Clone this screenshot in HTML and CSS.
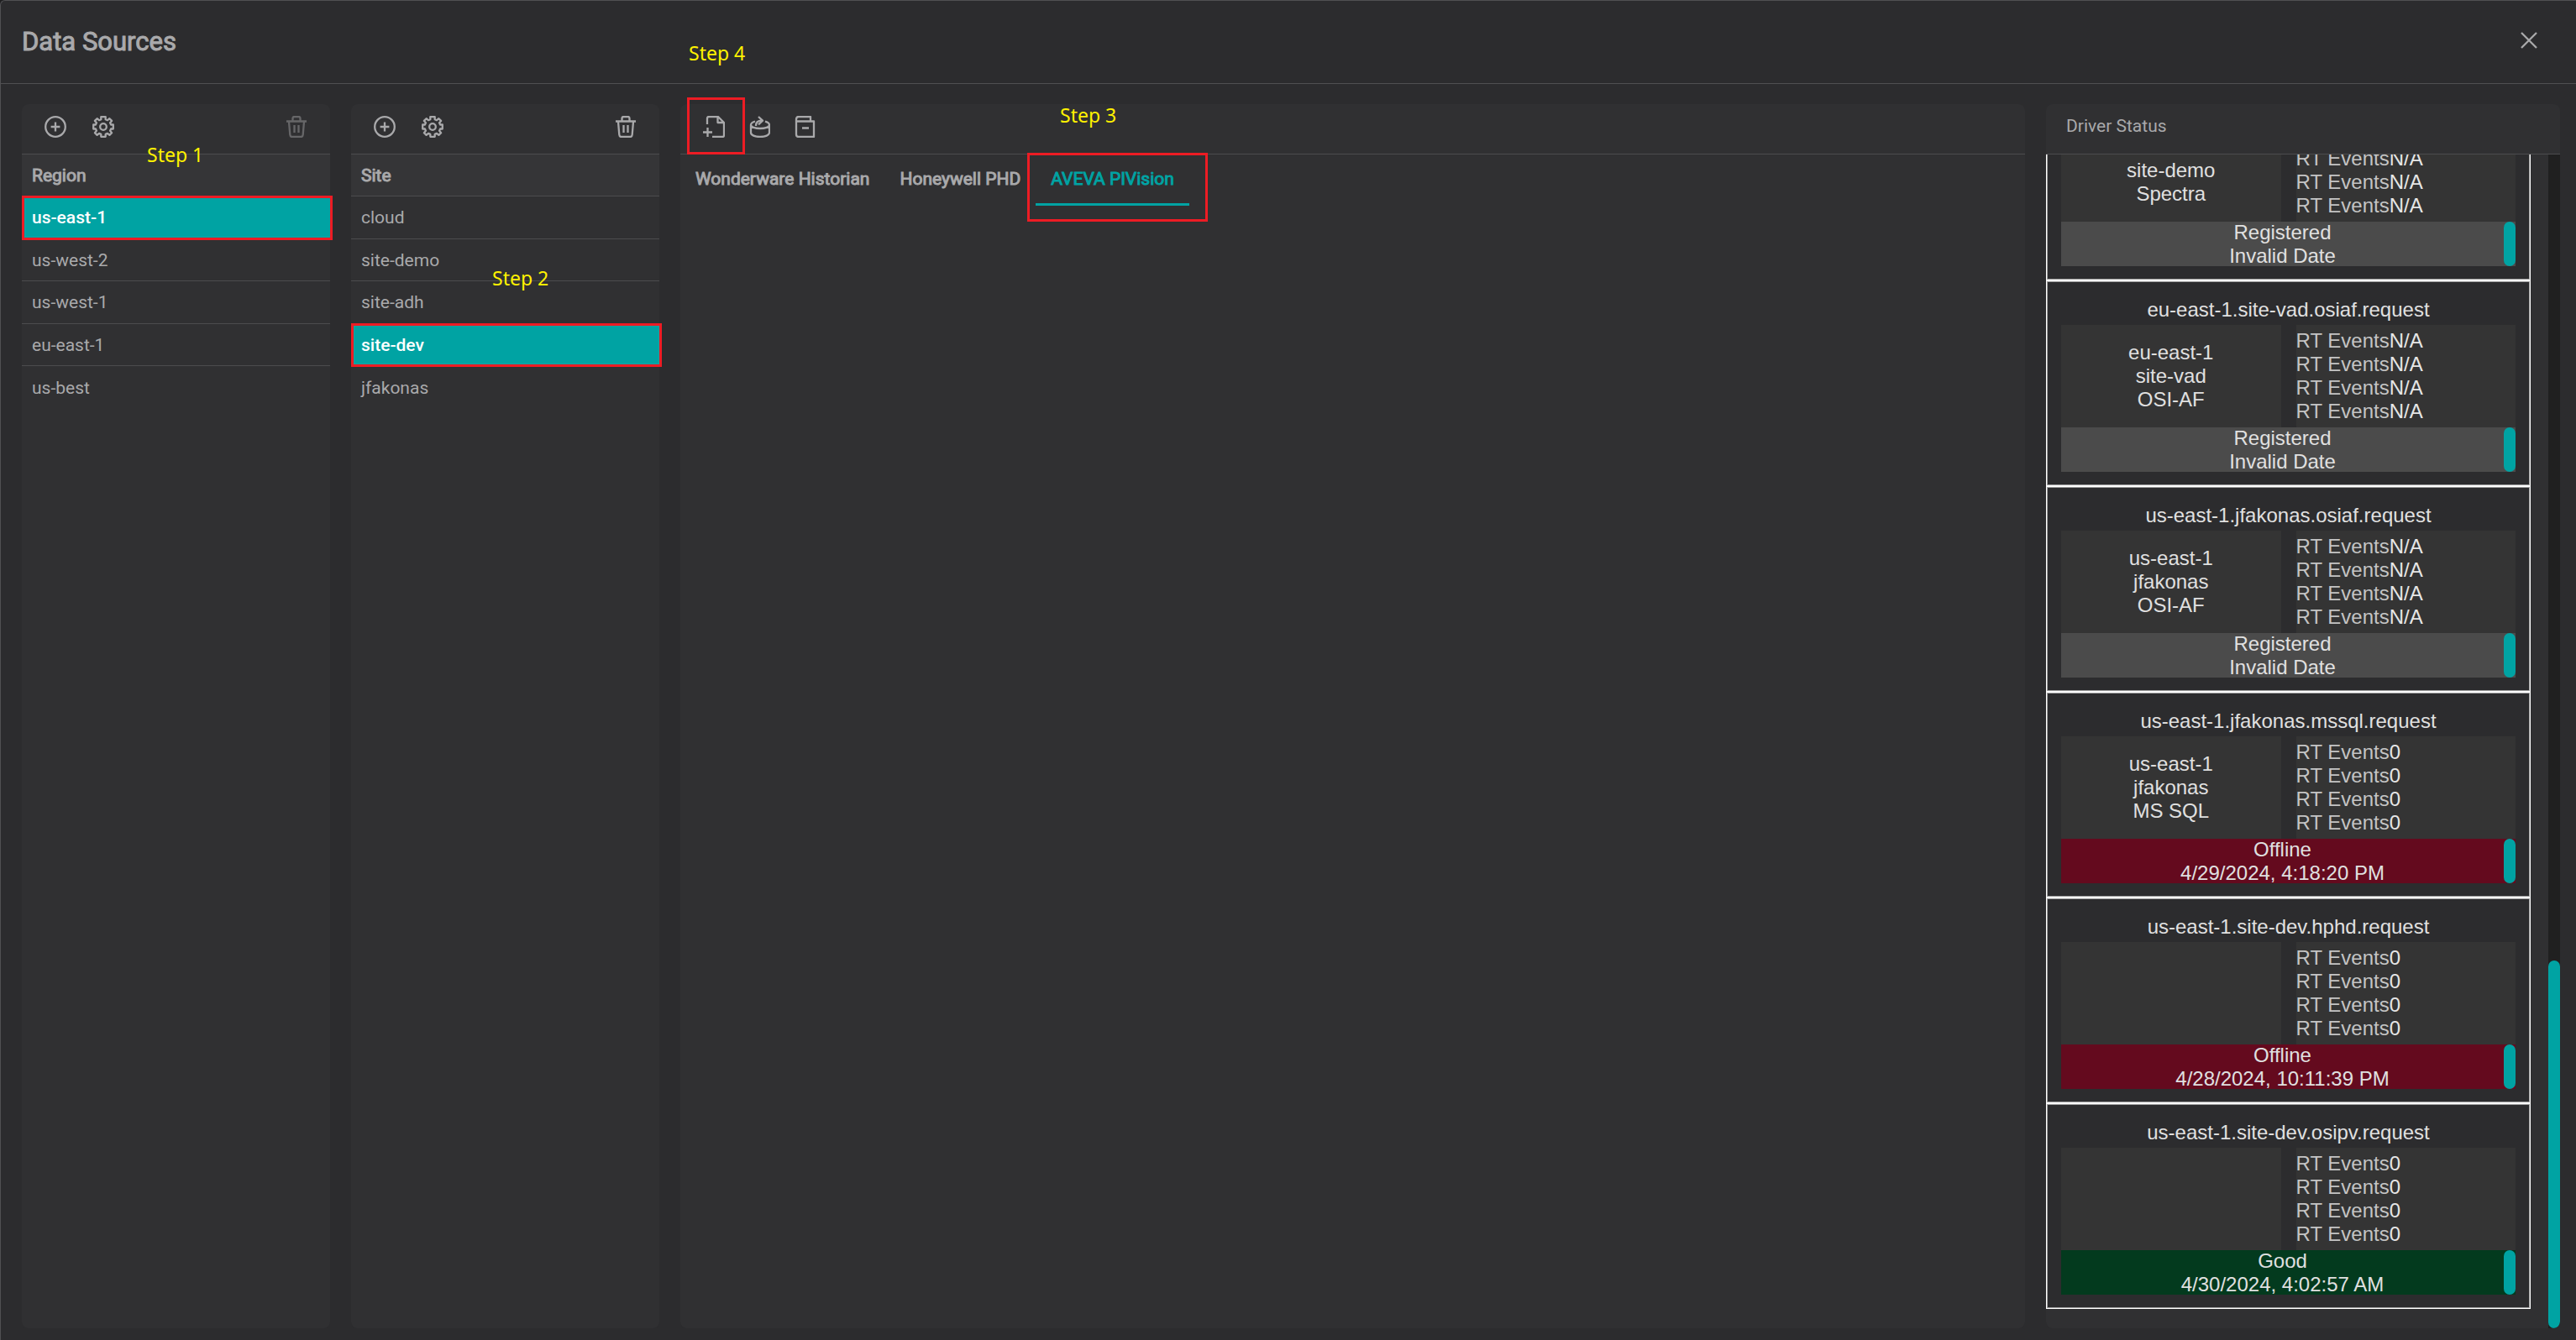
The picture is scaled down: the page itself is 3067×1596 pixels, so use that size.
FILE: index.html
```html
<!DOCTYPE html>
<html lang="en">
<head>
<meta charset="utf-8">
<title>Data Sources</title>
<link rel="stylesheet" href="styles.css">
</head>
<body>
<svg class="sprite" aria-hidden="true">
  <symbol id="i-add" viewBox="0 0 26 26"><circle cx="13" cy="13" r="11.8"/><path d="M13 7.6v10.8M7.6 13h10.8"/></symbol>
  <symbol id="i-gear" viewBox="0 0 26 26"><path d="M10.300 1.200h5.400V4.200L18 5.200l2.400-2 2.700 2.700-2 2.400 1 2.200h2.700v5h-2.700l-1 2.300 2 2.400-2.700 2.700-2.400-2-2.300 1v2.900h-5.400v-2.900l-2.300-1-2.400 2-2.700-2.700 2-2.400-1-2.300H1.200v-5h2.700l1-2.200-2-2.400 2.700-2.700 2.400 2 2.300-1z"/><circle cx="13" cy="13" r="3.800"/></symbol>
  <symbol id="i-trash" viewBox="0 0 26 26"><path d="M1 6.500h24M8.500 6V3q0-2 2-2h5q2 0 2 2v3M4 7l1.300 15.500q.2 2.500 2.500 2.500h10.400q2.300 0 2.500-2.500L22 7M10.500 11v9M15.500 11v9"/></symbol>
  <symbol id="i-file-add" viewBox="0 0 26 26"><path d="M5 10V3q0-2 2-2h11l7 7v15q0 2-2 2H11M17.500 1.500V8H24M5.500 14v11M0 19.500h11"/></symbol>
  <symbol id="i-db" viewBox="-1 0 26 26"><path d="M7 6.500C3.500 7.500 2 9 2 10.800c0 2.500 5 4.200 11 4.200s11-1.700 11-4.200c0-1.700-1.500-3.200-5-4.200M2 11v9c0 3 5 5 11 5s11-2 11-5v-9M8 12c0-4 2-6.300 7-6.300M11 1l5 4.700-5 4.700"/></symbol>
  <symbol id="i-book" viewBox="0 0 26 26"><path d="M20 6.500V1H6Q3 1 3 4v18q0 3 3 3h18V6.500H4M10 14.500h8"/></symbol>
  <symbol id="i-close" viewBox="0 0 20 20"><path d="M1 1l18 18M19 1L1 19"/></symbol>
</svg>
<main class="dialog">
  <header class="dialog-head">
    <h1>Data Sources</h1>
    <button class="icon-btn" aria-label="Close"><svg class="icon close"><use href="#i-close"/></svg></button>
  </header>
  <div class="columns">
    <section class="panel">
      <div class="toolbar">
        <button class="icon-btn" aria-label="Add region"><svg class="icon"><use href="#i-add"/></svg></button>
        <button class="icon-btn" aria-label="Region settings"><svg class="icon"><use href="#i-gear"/></svg></button>
        <button class="icon-btn push" aria-label="Delete region" disabled><svg class="icon"><use href="#i-trash"/></svg></button>
      </div>
      <table class="list">
        <thead><tr><th scope="col">Region</th></tr></thead>
        <tbody>
          <tr class="selected"><td>us-east-1<span class="mark mark-row"></span></td></tr>
          <tr><td>us-west-2</td></tr>
          <tr><td>us-west-1</td></tr>
          <tr><td>eu-east-1</td></tr>
          <tr><td>us-best</td></tr>
        </tbody>
      </table>
      <span class="step step-1">Step 1</span>
    </section>
    <section class="panel">
      <div class="toolbar">
        <button class="icon-btn" aria-label="Add site"><svg class="icon"><use href="#i-add"/></svg></button>
        <button class="icon-btn" aria-label="Site settings"><svg class="icon"><use href="#i-gear"/></svg></button>
        <button class="icon-btn push" aria-label="Delete site"><svg class="icon"><use href="#i-trash"/></svg></button>
      </div>
      <table class="list">
        <thead><tr><th scope="col">Site</th></tr></thead>
        <tbody>
          <tr><td>cloud</td></tr>
          <tr><td>site-demo</td></tr>
          <tr><td>site-adh</td></tr>
          <tr class="selected"><td>site-dev<span class="mark mark-row"></span></td></tr>
          <tr><td>jfakonas</td></tr>
        </tbody>
      </table>
      <span class="step step-2">Step 2</span>
    </section>
    <section class="panel">
      <div class="toolbar tight">
        <button class="icon-btn" aria-label="Add data source"><svg class="icon"><use href="#i-file-add"/></svg><span class="mark mark-add"></span></button>
        <button class="icon-btn" aria-label="Refresh data source"><svg class="icon"><use href="#i-db"/></svg></button>
        <button class="icon-btn" aria-label="Remove data source"><svg class="icon"><use href="#i-book"/></svg></button>
      </div>
      <nav class="tabs">
        <button class="tab">Wonderware Historian</button>
        <button class="tab">Honeywell PHD</button>
        <button class="tab active">AVEVA PIVision<span class="mark mark-tab"></span></button>
      </nav>
      <span class="step step-3">Step 3</span>
      <span class="step step-4">Step 4</span>
    </section>
    <section class="panel">
      <div class="toolbar status-title"><h2>Driver Status</h2></div>
      <div class="drivers">
        <div class="cards">
          <article class="card">
            <h3></h3>
            <div class="info"><br>site-demo<br>Spectra</div>
            <div class="events"><br><p>RT Events<b>N/A</b></p><p>RT Events<b>N/A</b></p><p>RT Events<b>N/A</b></p></div>
            <div class="state"><p>Registered<br>Invalid Date</p><i class="thumb"></i></div>
          </article>
          <article class="card">
            <h3>eu-east-1.site-vad.osiaf.request</h3>
            <div class="info">eu-east-1<br>site-vad<br>OSI-AF</div>
            <div class="events"><p>RT Events<b>N/A</b></p><p>RT Events<b>N/A</b></p><p>RT Events<b>N/A</b></p><p>RT Events<b>N/A</b></p></div>
            <div class="state"><p>Registered<br>Invalid Date</p><i class="thumb"></i></div>
          </article>
          <article class="card">
            <h3>us-east-1.jfakonas.osiaf.request</h3>
            <div class="info">us-east-1<br>jfakonas<br>OSI-AF</div>
            <div class="events"><p>RT Events<b>N/A</b></p><p>RT Events<b>N/A</b></p><p>RT Events<b>N/A</b></p><p>RT Events<b>N/A</b></p></div>
            <div class="state"><p>Registered<br>Invalid Date</p><i class="thumb"></i></div>
          </article>
          <article class="card">
            <h3>us-east-1.jfakonas.mssql.request</h3>
            <div class="info">us-east-1<br>jfakonas<br>MS SQL</div>
            <div class="events"><p>RT Events<b>0</b></p><p>RT Events<b>0</b></p><p>RT Events<b>0</b></p><p>RT Events<b>0</b></p></div>
            <div class="state offline"><p>Offline<br>4/29/2024, 4:18:20 PM</p><i class="thumb"></i></div>
          </article>
          <article class="card">
            <h3>us-east-1.site-dev.hphd.request</h3>
            <div class="info"></div>
            <div class="events"><p>RT Events<b>0</b></p><p>RT Events<b>0</b></p><p>RT Events<b>0</b></p><p>RT Events<b>0</b></p></div>
            <div class="state offline"><p>Offline<br>4/28/2024, 10:11:39 PM</p><i class="thumb"></i></div>
          </article>
          <article class="card">
            <h3>us-east-1.site-dev.osipv.request</h3>
            <div class="info"></div>
            <div class="events"><p>RT Events<b>0</b></p><p>RT Events<b>0</b></p><p>RT Events<b>0</b></p><p>RT Events<b>0</b></p></div>
            <div class="state good"><p>Good<br>4/30/2024, 4:02:57 AM</p><i class="thumb"></i></div>
          </article>
        </div>
        <div class="track"><i class="thumb"></i></div>
      </div>
    </section>
  </div>
</main>
</body>
</html>
```

FILE: styles.css
```css
* { box-sizing: border-box; }
body {
  margin: 0;
  background: #1e1e1f;
  color: #a9a9ab;
  font: 400 21px/24px Roboto, "Liberation Sans", sans-serif;
}
h1, h2, h3, p { margin: 0; }
button { border: 0; padding: 0; background: none; color: inherit; font: inherit; }
.sprite { position: absolute; width: 0; height: 0; }

.dialog {
  height: 100vh;
  display: flex;
  flex-direction: column;
  background: #2c2c2e;
  border: solid #505052;
  border-width: 1px 0 0 1px;
  border-radius: 6px 0 0 0;
}
.dialog-head {
  display: flex;
  align-items: center;
  justify-content: space-between;
  height: 99px;
  padding: 0 46px 4px 25px;
  border-bottom: 1px solid #505052;
}
h1 { padding-top: 4px; font-size: 31px; font-weight: 400; line-height: 40px; }
h1, .list th, .tab { -webkit-text-stroke: 1px currentColor; }

.columns {
  flex: 1;
  min-height: 0;
  display: grid;
  grid-template-columns: 367fr 367fr 1601fr 612fr;
  gap: 25px;
  padding: 24px 19px 14px 25px;
}
.panel {
  position: relative;
  display: flex;
  flex-direction: column;
  min-width: 0;
  min-height: 0;
  background: #303032;
  border-radius: 8px;
}

.toolbar {
  display: flex;
  align-items: center;
  gap: 31px;
  flex: none;
  height: 60px;
  padding: 0 27px 5px;
  border-bottom: 1px solid #4c4c4e;
}
.toolbar.tight { gap: 28px; }
.toolbar.status-title { padding: 0 24px 8px; }
h2 { font-size: 21px; font-weight: 400; line-height: 24px; }
.icon-btn { position: relative; display: flex; }
.icon-btn:disabled { opacity: .45; }
.push { margin-left: auto; }
.icon { width: 26px; height: 26px; overflow: visible; fill: none; stroke: #a9a9ab; stroke-width: 2.3; stroke-linejoin: round; }
.icon.close { width: 20px; height: 20px; }

.list { width: 100%; border-spacing: 0; }
.list th, .list td { position: relative; height: 50px; padding: 0 12px; text-align: left; border-bottom: 1px solid #4c4c4e; }
.list tr:nth-child(odd) td { height: 51px; }
.list th { background: #353537; font-weight: 400; }
.list tr:last-child td { border-bottom: 0; }
.list .selected td { background: #00a3a3; color: #fff; font-weight: 500; }

.tabs { display: flex; }
.tab { position: relative; height: 61px; padding: 0 18px; border-bottom: 3px solid transparent; }
.tab.active { color: #00a3a3; border-color: #00a3a3; }

.drivers {
  flex: 1;
  min-height: 0;
  display: flex;
  gap: 21px;
  overflow: hidden;
  border-radius: 0 0 8px 8px;
  color: #e0e0e0;
  font: 24px/28px "Liberation Sans", Arial, sans-serif;
}
.cards {
  flex: 1;
  min-width: 0;
  display: flex;
  flex-direction: column;
  justify-content: flex-end;
  padding-bottom: 23px;
}
.card {
  flex: none;
  display: grid;
  grid-template: 32px 122px 53px / 1fr 1fr;
  column-gap: 18px;
  padding: 20px 17px 16px;
  border: 1px solid #fff;
  box-shadow: inset 0 0 0 1px #a0a0a0;
  background: #2c2c2e;
}
.card h3 { grid-column: 1 / -1; font: inherit; text-align: center; }
.info, .events { background: #343434; }
.info { padding-top: 19px; text-align: center; }
.events { padding-top: 5px; color: #c4c4c4; }
.events b { color: #e6e6e6; font-weight: 400; }
.state { grid-column: 1 / -1; display: flex; min-width: 0; background: #4b4b4b; text-align: center; }
.state p { flex: 1; margin: -1px 0 -2px; }
.state .thumb { width: 14px; }
.state.offline { background: #640a1e; }
.state.good { background: #033a1e; }
.track { flex: none; display: flex; align-items: flex-end; width: 14px; background: #202020; }
.track .thumb { width: 100%; height: 31.35%; }
.thumb { border-radius: 7px; background: #00a3a3; }

/* Walk-through callouts laid over the controls they point at */
.mark { position: absolute; border: 3px solid #ed1c24; pointer-events: none; }
.mark-row { inset: -1px -3px -2px 0; z-index: 1; }
.mark-add { inset: -22px -24px -20px -19px; }
.mark-tab { inset: -2px -22px -22px -10px; }
.step { position: absolute; color: #fff200; font: 23px/30px "Noto Sans", sans-serif; white-space: nowrap; }
.step-1 { left: 149px; top: 45px; }
.step-2 { left: 168px; top: 192px; }
.step-3 { left: 452px; top: -2px; }
.step-4 { left: 10px; top: -76px; }
```
